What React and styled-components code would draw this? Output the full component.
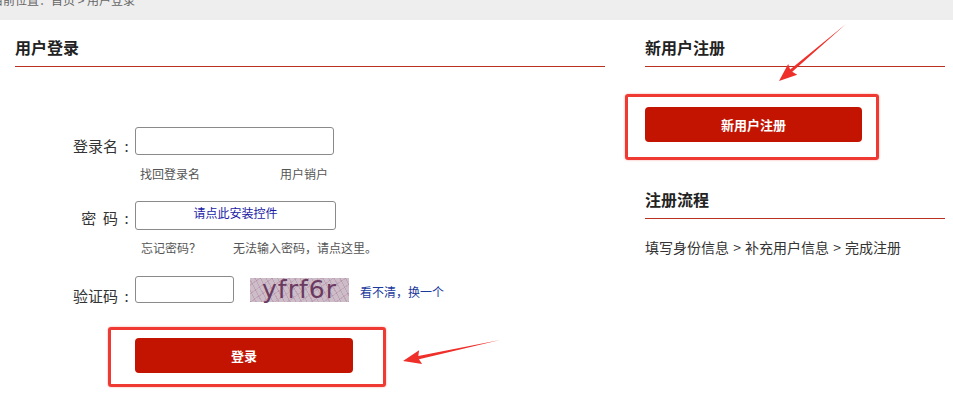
import React from "react";
import styled, { createGlobalStyle } from "styled-components";

const GlobalStyle = createGlobalStyle`
  body {
    margin: 0;
    background: #fff;
    font-family: "Noto Sans CJK SC", "Noto Sans", sans-serif;
    color: #333;
  }
`;

const Page = styled.div`
  position: relative;
  width: 953px;
  height: 412px;
  overflow: hidden;
`;

const Crumbs = styled.div`
  height: 20px;
  background: #eeeeee;
  overflow: hidden;
`;

const CrumbText = styled.div`
  margin: -10px 0 0 -9px;
  font-size: 12px;
  line-height: 20px;
  color: #666;
`;

const Columns = styled.div`
  display: flex;
  gap: 40px;
  padding-left: 15px;
`;

const Column = styled.div`
  width: ${(p) => p.$width}px;
  display: flex;
  flex-direction: column;
`;

const Heading = styled.h2`
  margin: ${(p) => p.$top || 15}px 0 0;
  padding-bottom: 7px;
  font-size: 16px;
  font-weight: bold;
  line-height: 24px;
  color: #222;
  border-bottom: 1px solid #b8321f;
`;

const Form = styled.div`
  display: flex;
  flex-direction: column;
  margin-top: 60px;
`;

const FieldRow = styled.div`
  display: flex;
  align-items: center;
  margin-top: ${(p) => p.$top || 0}px;
`;

const Label = styled.span`
  align-self: flex-end;
  width: 120px;
  text-align: right;
  font-size: 15px;
  line-height: ${(p) => p.$lh}px;
  color: #333;
  white-space: nowrap;
`;

const Colon = styled.span`
  display: inline-block;
  width: 17px;
  text-align: center;
`;

const Input = styled.input`
  box-sizing: border-box;
  width: ${(p) => p.$w}px;
  height: ${(p) => p.$h}px;
  border: 1px solid #8a8a8a;
  border-radius: 3px;
  padding: 0 6px;
  outline: none;
`;

const ControlBox = styled.div`
  box-sizing: border-box;
  width: 201px;
  height: 29px;
  border: 1px solid #8a8a8a;
  border-radius: 3px;
  text-align: center;
  font-size: 12px;
  line-height: 22px;
  color: #1a1aa6;
`;

const HintRow = styled.div`
  display: flex;
  margin: ${(p) => p.$top}px 0 0 ${(p) => p.$left}px;
  gap: ${(p) => p.$gap}px;
  font-size: 12px;
  line-height: 18px;
  color: #555;
`;

const Captcha = styled.div`
  margin-left: 16px;
  width: 99px;
  height: 24px;
  background:
    repeating-linear-gradient(62deg, rgba(150, 90, 130, 0.25) 0 1px, transparent 1px 5px),
    repeating-linear-gradient(-35deg, rgba(170, 120, 150, 0.3) 0 1px, transparent 1px 7px),
    #cdbdc8;
  font-family: "DejaVu Sans", sans-serif;
  font-size: 25px;
  line-height: 24px;
  text-align: center;
  color: #6a3a60;
  letter-spacing: 1px;
`;

const LinkText = styled.span`
  margin: 4px 0 0 11px;
  font-size: 12px;
  color: #1a3a9c;
`;

const Highlight = styled.div`
  align-self: flex-start;
  margin: ${(p) => p.$margin};
  padding: ${(p) => p.$pad};
  border: 3px solid #ef3a33;
  border-radius: 3px;
  box-shadow: 0 0 2px rgba(239, 58, 51, 0.5);
`;

const RedButton = styled.button`
  display: block;
  width: ${(p) => p.$w}px;
  height: 35px;
  border: none;
  border-radius: 4px;
  background: #c21400;
  color: #fff;
  font-family: "Noto Sans CJK SC", sans-serif;
  font-size: 13px;
  font-weight: bold;
`;

const FlowText = styled.p`
  margin: 18px 0 0;
  font-size: 14px;
  line-height: 20px;
  color: #333;
  word-spacing: 1px;
`;

const Arrows = styled.svg`
  position: absolute;
  left: 0;
  top: 0;
  pointer-events: none;
`;

function Arrow({ x1, y1, x2, y2 }) {
  const dx = x2 - x1;
  const dy = y2 - y1;
  const len = Math.hypot(dx, dy);
  const ux = dx / len;
  const uy = dy / len;
  const nx = -uy;
  const ny = ux;
  const headLen = 16;
  const headW = 7;
  const bx = x2 - ux * headLen;
  const by = y2 - uy * headLen;
  const pts = [
    [x1, y1],
    [bx + nx * 1.6, by + ny * 1.6],
    [bx + nx * headW - ux * 2, by + ny * headW - uy * 2],
    [x2, y2],
    [bx - nx * headW - ux * 2, by - ny * headW - uy * 2],
    [bx - nx * 1.6, by - ny * 1.6],
  ];
  return <polygon points={pts.map((p) => p.join(",")).join(" ")} fill="#ee2f2a" />;
}

export default function App() {
  return (
    <Page>
      <GlobalStyle />
      <Crumbs>
        <CrumbText>当前位置：首页 &gt; 用户登录</CrumbText>
      </Crumbs>
      <Columns>
        <Column $width={590}>
          <Heading>用户登录</Heading>
          <Form>
            <FieldRow>
              <Label $lh={18}>登录名<Colon>:</Colon></Label>
              <Input $w={199} $h={28} />
            </FieldRow>
            <HintRow $top={10} $left={125} $gap={80}>
              <span>找回登录名</span>
              <span>用户销户</span>
            </HintRow>
            <FieldRow $top={18}>
              <Label $lh={24}>密&nbsp;&nbsp;码<Colon>:</Colon></Label>
              <ControlBox>请点此安装控件</ControlBox>
            </FieldRow>
            <HintRow $top={9} $left={126} $gap={32}>
              <span>忘记密码？</span>
              <span>无法输入密码，请点这里。</span>
            </HintRow>
            <FieldRow $top={19}>
              <Label $lh={14}>验证码<Colon>:</Colon></Label>
              <Input $w={99} $h={27} />
              <Captcha>yfrf6r</Captcha>
              <LinkText>看不清，换一个</LinkText>
            </FieldRow>
            <Highlight $margin="24px 0 0 93px" $pad="8px 30px 11px 24px">
              <RedButton $w={218}>登录</RedButton>
            </Highlight>
          </Form>
        </Column>
        <Column $width={300}>
          <Heading>新用户注册</Heading>
          <Highlight $margin="27px 0 0 -20px" $pad="10px 14px 15px 17px">
            <RedButton $w={217}>新用户注册</RedButton>
          </Highlight>
          <Heading $top={27}>注册流程</Heading>
          <FlowText>填写身份信息 &gt; 补充用户信息 &gt; 完成注册</FlowText>
        </Column>
      </Columns>
      <Arrows width="953" height="412" viewBox="0 0 953 412">
        <Arrow x1={500} y1={340} x2={403} y2={361} />
        <Arrow x1={846} y1={24} x2={779} y2={81} />
      </Arrows>
    </Page>
  );
}
